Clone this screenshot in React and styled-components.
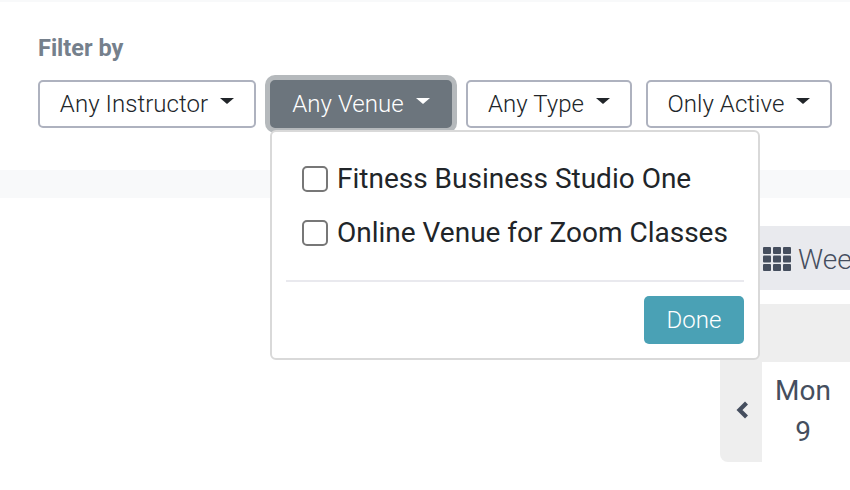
import React from "react";
import styled, { createGlobalStyle } from "styled-components";

const GlobalStyle = createGlobalStyle`
  html, body {
    margin: 0;
    padding: 0;
    height: 100%;
    overflow: hidden;
    background: #fff;
    font-family: Roboto, "Liberation Sans", sans-serif;
  }
  * { box-sizing: border-box; }
`;

const Page = styled.div`
  width: 850px;
  height: 490px;
  overflow: hidden;
  border-top: 2px solid #f8f9fa;
`;

const FilterSection = styled.section`
  height: 168px;
  padding: 34px 0 0 38px;
`;

const FilterLabel = styled.div`
  font-size: 23.5px;
  line-height: 24px;
  font-weight: 700;
  color: #75808c;
  margin-bottom: 20px;
`;

const FilterRow = styled.div`
  display: flex;
  gap: 14px;
`;

const DropdownWrap = styled.div`
  position: relative;
`;

const FilterButton = styled.button`
  display: flex;
  align-items: center;
  justify-content: center;
  height: 48px;
  width: ${(p) => p.$width}px;
  padding: 0;
  border-radius: 5px;
  border: 2px solid ${(p) => (p.$open ? "#6c757d" : "#aeb2bf")};
  background: ${(p) => (p.$open ? "#6c757d" : "#fff")};
  color: ${(p) => (p.$open ? "#fff" : "#212529")};
  box-shadow: ${(p) => (p.$open ? "0 0 0 5px #b5b9bc" : "none")};
  font-family: inherit;
  font-size: 24px;
  font-weight: 300;
  line-height: 30px;
  letter-spacing: 0.05px;
`;

const Caret = styled.span`
  display: inline-block;
  margin-left: 12px;
  margin-bottom: 6px;
  border-top: 6.5px solid currentColor;
  border-left: 7px solid transparent;
  border-right: 7px solid transparent;
`;

const Menu = styled.div`
  position: absolute;
  top: 50px;
  left: 0;
  z-index: 2;
  width: 490px;
  height: 230px;
  padding: 20px 14px 14px;
  background: #fff;
  border: 2px solid #d9d9d9;
  border-radius: 6px;
`;

const Option = styled.label`
  display: flex;
  align-items: center;
  height: 54px;
  padding-left: 16px;
  font-size: 28px;
  font-weight: 400;
  color: #212529;
  white-space: nowrap;
`;

const OptionText = styled.span`
  padding-bottom: 2px;
`;

const Check = styled.span`
  flex: none;
  width: 26px;
  height: 26px;
  margin-right: 9px;
  border: 2px solid #777;
  border-radius: 5px;
  background: #fff;
`;

const MenuDivider = styled.hr`
  margin: 20px 0 14px;
  border: 0;
  border-top: 2px solid #e9e9ee;
`;

const MenuFooter = styled.div`
  display: flex;
  justify-content: flex-end;
`;

const DoneButton = styled.button`
  width: 100px;
  height: 48px;
  padding: 0;
  border: 0;
  border-radius: 5px;
  background: #4aa1b5;
  color: #fff;
  font-family: inherit;
  font-size: 24px;
  font-weight: 300;
`;

const Band = styled.div`
  height: 28px;
  background: #f8f9fa;
`;

const Calendar = styled.section`
  padding-top: 28px;
  display: flex;
  flex-direction: column;
  align-items: flex-end;
`;

const ViewBar = styled.div`
  display: flex;
  align-items: center;
  width: 130px;
  height: 64px;
  padding: 2px 0 0 43px;
  overflow: hidden;
  background: #e9eaee;
  color: #454e5e;
  font-size: 28px;
  font-weight: 300;
  white-space: nowrap;
  margin-bottom: 14px;
`;

const GridIcon = styled.svg`
  flex: none;
  width: 28px;
  height: 24px;
  margin-right: 7px;
  fill: #454e5e;
`;

const Week = styled.div`
  width: 130px;
`;

const WeekHeader = styled.div`
  height: 58px;
  background: #eeeeee;
`;

const WeekRow = styled.div`
  display: flex;
  height: 100px;
`;

const PrevCell = styled.div`
  display: flex;
  align-items: center;
  justify-content: center;
  width: 42px;
  padding: 0 0 5px 2px;
  background: #eeeeee;
  border-bottom-left-radius: 8px;
`;

const DayCell = styled.div`
  flex: 1;
  padding: 8px 6px 0 0;
  text-align: center;
  color: #454e5e;
  font-size: 28px;
  line-height: 41px;
  font-weight: 400;
`;

const venues = ["Fitness Business Studio One", "Online Venue for Zoom Classes"];

const GridGlyph = () => (
  <GridIcon viewBox="0 0 28 24">
    {[0, 1, 2].map((row) =>
      [0, 1, 2].map((col) => (
        <rect key={`${row}-${col}`} x={col * 10} y={row * 8.5} width="8" height="7" rx="1" />
      ))
    )}
  </GridIcon>
);

const App = () => {
  return (
    <Page>
      <GlobalStyle />
      <FilterSection>
        <FilterLabel>Filter by</FilterLabel>
        <FilterRow>
          <FilterButton $width={218}>
            Any Instructor
            <Caret />
          </FilterButton>
          <DropdownWrap>
            <FilterButton $width={182} $open>
              Any Venue
              <Caret />
            </FilterButton>
            <Menu>
              {venues.map((venue) => (
                <Option key={venue}>
                  <Check />
                  <OptionText>{venue}</OptionText>
                </Option>
              ))}
              <MenuDivider />
              <MenuFooter>
                <DoneButton>Done</DoneButton>
              </MenuFooter>
            </Menu>
          </DropdownWrap>
          <FilterButton $width={166}>
            Any Type
            <Caret />
          </FilterButton>
          <FilterButton $width={186}>
            Only Active
            <Caret />
          </FilterButton>
        </FilterRow>
      </FilterSection>
      <Band />
      <Calendar>
        <ViewBar>
          <GridGlyph />
          Week
        </ViewBar>
        <Week>
          <WeekHeader />
          <WeekRow>
            <PrevCell>
              <svg width="14" height="18" viewBox="0 0 14 18">
                <path d="M11.5 2 4.5 9l7 7" fill="none" stroke="#454e5e" strokeWidth="4.2" />
              </svg>
            </PrevCell>
            <DayCell>
              Mon
              <br />9
            </DayCell>
          </WeekRow>
        </Week>
      </Calendar>
    </Page>
  );
};

export default App;
